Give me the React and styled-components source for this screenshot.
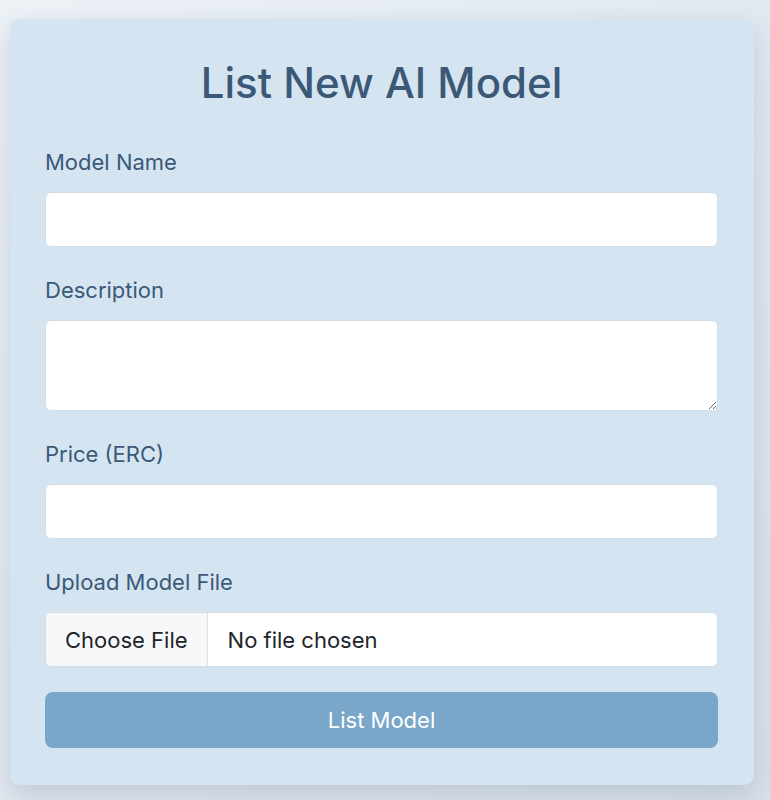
import React, { useState } from "react";
import styled, { createGlobalStyle } from "styled-components";

const GlobalStyle = createGlobalStyle`
  * {
    box-sizing: border-box;
  }
  body {
    margin: 0;
    font-family: Inter, "Noto Sans", sans-serif;
    background: linear-gradient(135deg, #edf2f7 0%, #e2e9f1 50%, #d9e1ea 100%);
    min-height: 100vh;
  }
`

const Page = styled.main`
  padding: 19px 16px 14px 10px;
`

const Card = styled.section`
  background-color: #d4e4f1;
  border-radius: 10px;
  box-shadow: 0 10px 28px rgba(40, 60, 90, 0.18);
  padding: 39px 36px 37px 35px;
`

const Title = styled.h2`
  margin: 0 0 41px;
  text-align: center;
  font-size: 42px;
  font-weight: 500;
  line-height: 50px;
  color: #3b5977;
`

const Form = styled.form`
  display: flex;
  flex-direction: column;
`

const Group = styled.div`
  display: flex;
  flex-direction: column;
  margin-bottom: 30px;

  &:last-of-type {
    margin-bottom: 25px;
  }
`

const Label = styled.label`
  font-size: 22px;
  line-height: 26px;
  color: #3b5977;
  margin-bottom: 17px;
`

const Input = styled.input`
  height: 55px;
  border: 1px solid #d3dde6;
  border-radius: 6px;
  background: #fff;
  padding: 0 18px;
  font: inherit;
  font-size: 22px;
  outline: none;
`

const TextArea = styled.textarea`
  height: 91px;
  border: 1px solid #d3dde6;
  border-radius: 6px;
  background: #fff;
  padding: 12px 18px;
  font: inherit;
  font-size: 22px;
  outline: none;
  resize: vertical;
`

const FileInput = styled.input`
  height: 55px;
  border: 1px solid #d3dde6;
  border-radius: 6px;
  background: #fff;
  font-family: Inter, "Noto Sans", sans-serif;
  font-size: 22px;
  color: #212529;
  padding: 0;
  overflow: hidden;

  &::file-selector-button {
    height: 100%;
    margin: 0 20px 0 0;
    padding: 0 19px;
    border: none;
    border-right: 1px solid #dfe3e8;
    background: #f7f8fa;
    color: #212529;
    font: inherit;
    cursor: pointer;
  }
`

const Submit = styled.button`
  height: 56px;
  border: none;
  border-radius: 8px;
  background-color: #7aa7c9;
  color: #fff;
  font-family: Inter, "Noto Sans", sans-serif;
  font-size: 22px;
  cursor: pointer;
`

const App = () => {
  const [name, setName] = useState("")
  const [description, setDescription] = useState("")
  const [price, setPrice] = useState("")

  const handleSubmit = (event) => {
    event.preventDefault()
  }

  return (
    <>
      <GlobalStyle />
      <Page>
        <Card>
          <Title>List New AI Model</Title>
          <Form onSubmit={handleSubmit}>
            <Group>
              <Label htmlFor="name">Model Name</Label>
              <Input
                id="name"
                type="text"
                value={name}
                onChange={(event) => setName(event.target.value)}
              />
            </Group>
            <Group>
              <Label htmlFor="description">Description</Label>
              <TextArea
                id="description"
                value={description}
                onChange={(event) => setDescription(event.target.value)}
              />
            </Group>
            <Group>
              <Label htmlFor="price">Price (ERC)</Label>
              <Input
                id="price"
                type="number"
                value={price}
                onChange={(event) => setPrice(event.target.value)}
              />
            </Group>
            <Group>
              <Label htmlFor="file">Upload Model File</Label>
              <FileInput id="file" type="file" />
            </Group>
            <Submit type="submit">List Model</Submit>
          </Form>
        </Card>
      </Page>
    </>
  )
}

export default App
